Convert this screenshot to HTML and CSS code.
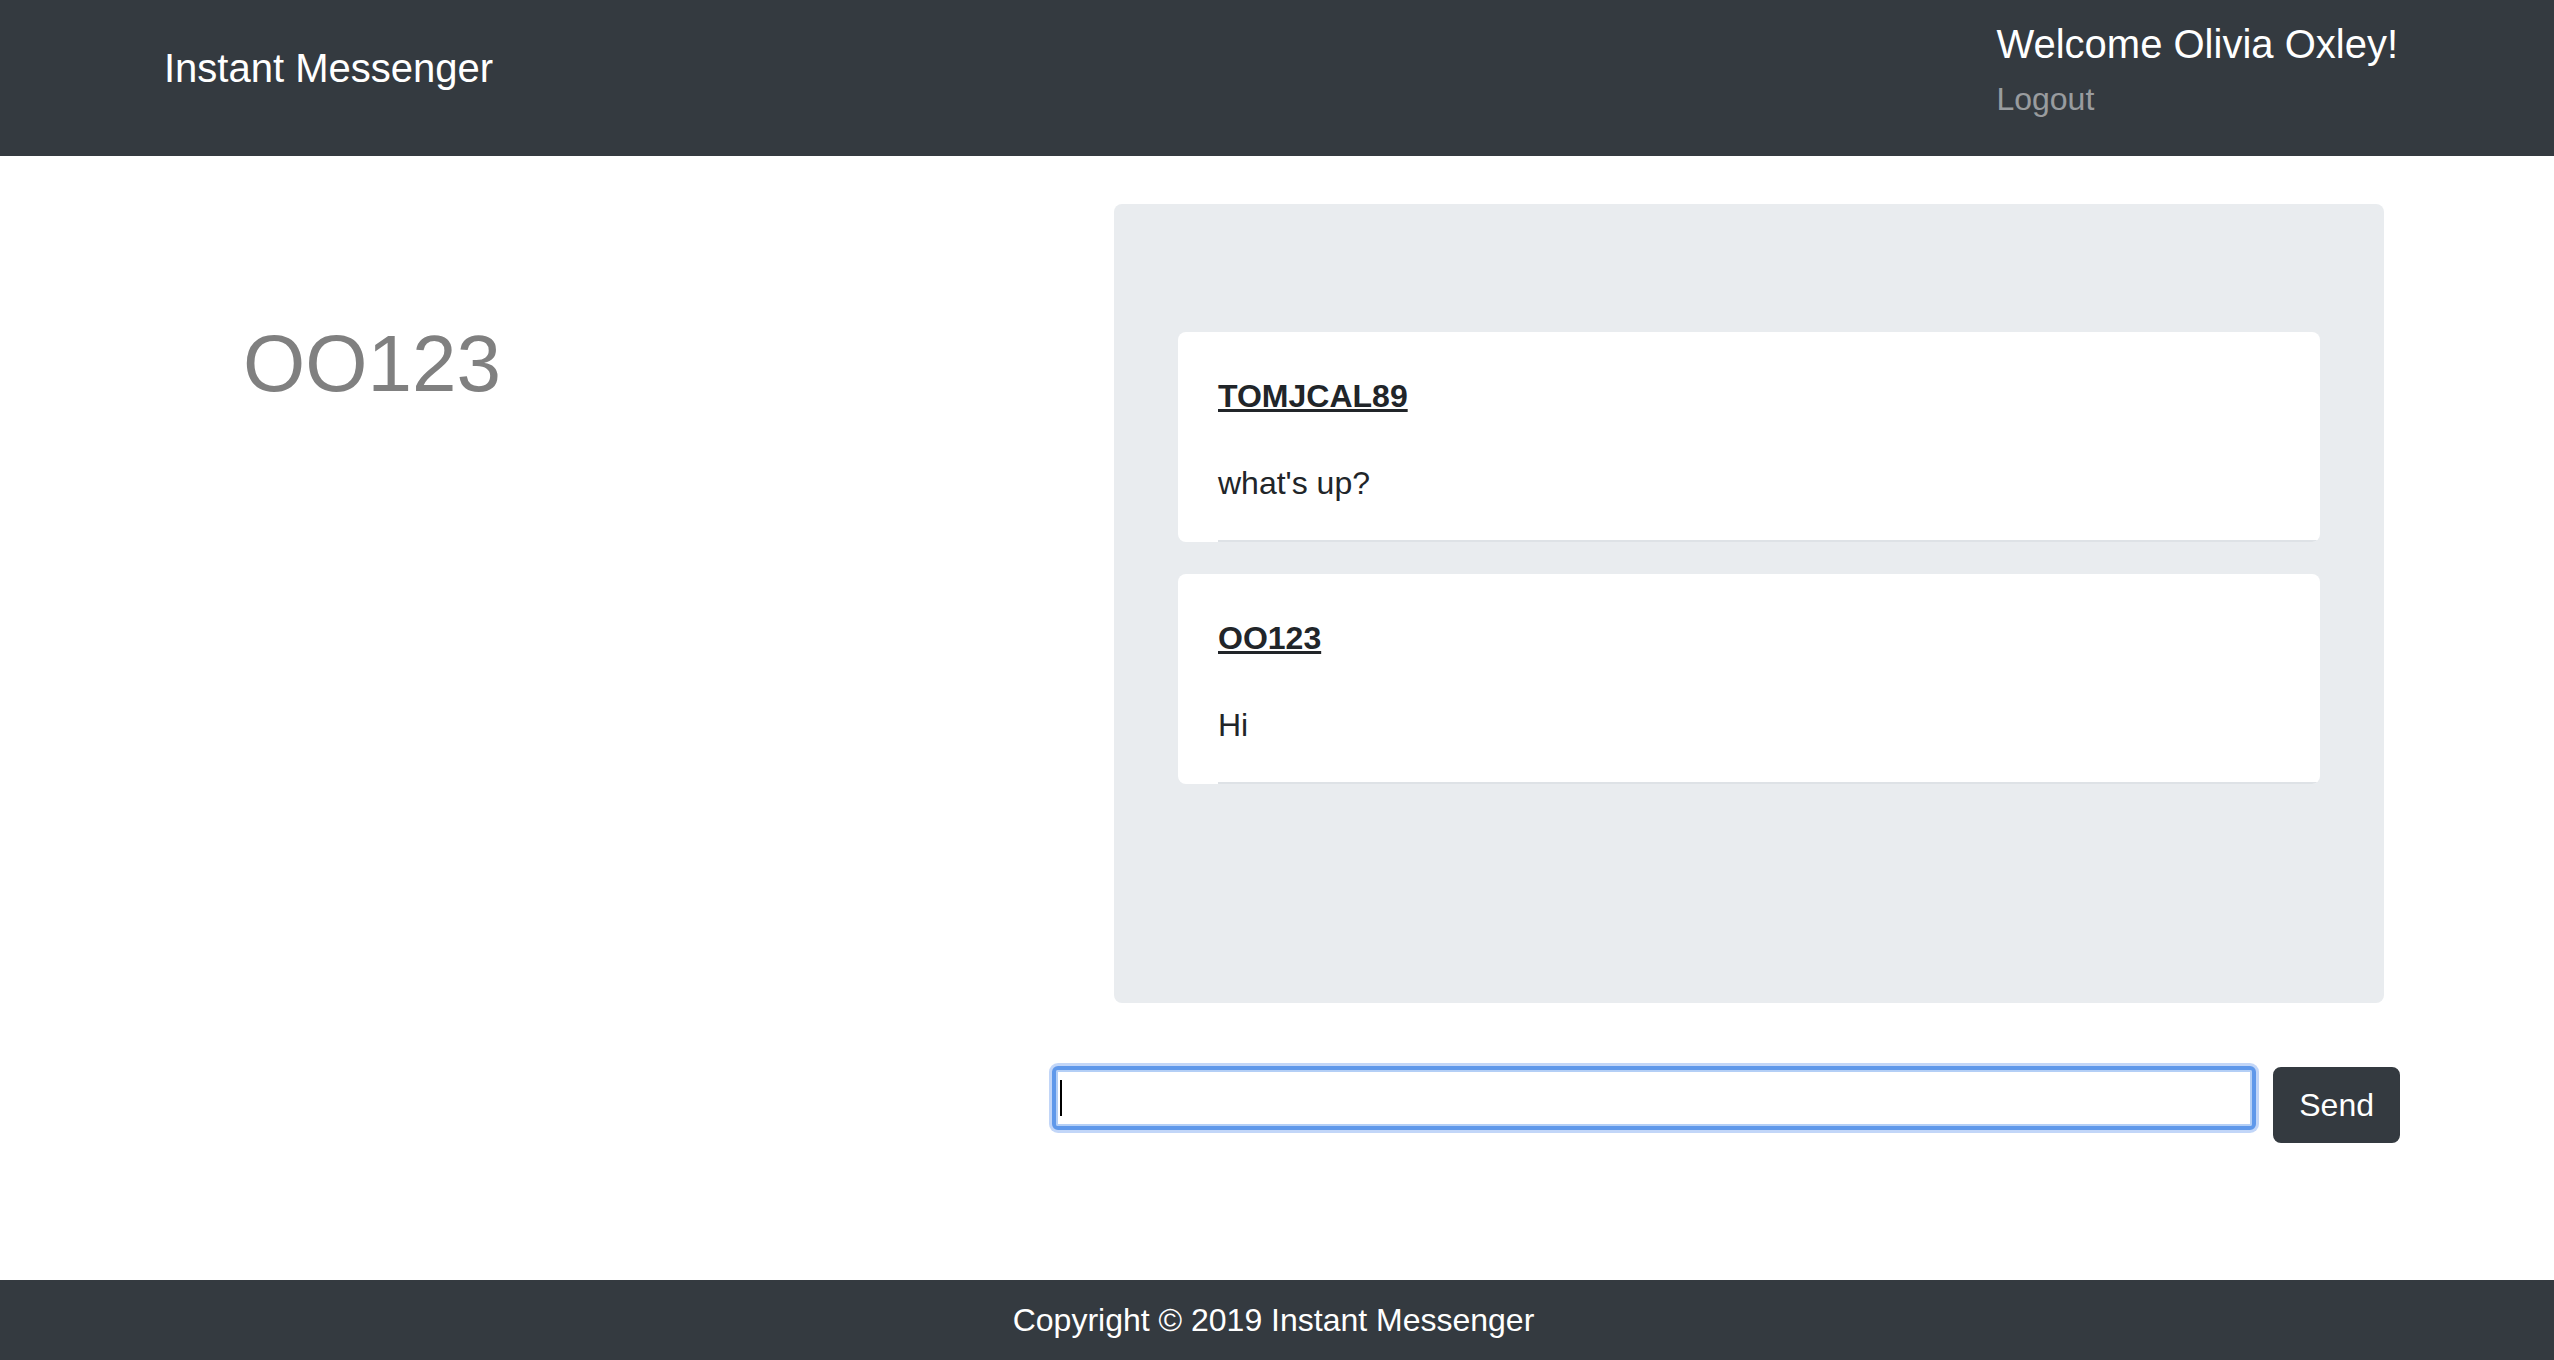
FILE: index.html
```html
<!DOCTYPE html>
<html lang="en">
<head>
<meta charset="utf-8">
<title>Instant Messenger</title>
<link rel="stylesheet" href="styles.css">
</head>
<body>
<header class="topbar">
  <a class="brand" href="#">Instant Messenger</a>
  <div class="user">
    <div class="welcome">Welcome Olivia Oxley!</div>
    <a class="logout" href="#">Logout</a>
  </div>
</header>
<main class="main">
  <section class="sidebar">
    <h1 class="me">OO123</h1>
  </section>
  <section class="chat">
    <div class="thread">
      <div class="msg">
        <div class="msg-body">
          <p class="author">TOMJCAL89</p>
          <p class="text">what's up?</p>
        </div>
      </div>
      <div class="msg">
        <div class="msg-body">
          <p class="author">OO123</p>
          <p class="text">Hi</p>
        </div>
      </div>
    </div>
    <form class="composer" onsubmit="return false;">
      <div class="field">
        <input class="input" type="text" aria-label="Message">
        <span class="caret"></span>
      </div>
      <button class="send" type="submit">Send</button>
    </form>
  </section>
</main>
<footer class="footer">Copyright © 2019 Instant Messenger</footer>
</body>
</html>
```

FILE: styles.css
```css
html, body {
  margin: 0;
  padding: 0;
}

body {
  font-family: "Liberation Sans", Arial, Helvetica, sans-serif;
  min-height: 100vh;
  display: flex;
  flex-direction: column;
  background: #fff;
  color: #212529;
}

.topbar {
  background: #343a40;
  height: 156px;
  box-sizing: border-box;
  display: flex;
  justify-content: space-between;
  align-items: flex-start;
  padding: 0 156px 0 164px;
}

.brand {
  color: #fff;
  font-size: 40px;
  line-height: 60px;
  margin-top: 38px;
  text-decoration: none;
}

.user {
  padding-top: 20px;
}

.welcome {
  color: #fff;
  font-size: 40px;
  line-height: 48px;
  margin-bottom: 7px;
}

.logout {
  display: block;
  color: rgba(255, 255, 255, 0.5);
  font-size: 32px;
  line-height: 48px;
  text-decoration: none;
}

.main {
  flex: 1;
  display: grid;
  grid-template-columns: 1052px 1fr;
  align-items: start;
}

.sidebar {
  padding: 160px 0 0 243px;
}

.me {
  margin: 0;
  font-size: 80px;
  line-height: 1.2;
  font-weight: normal;
  color: #808080;
}

.chat {
  padding-top: 48px;
}

.thread {
  margin-left: 62px;
  width: 1270px;
  box-sizing: border-box;
  background: #e9ecef;
  border-radius: 8px;
  padding: 128px 64px 219px;
}

.msg {
  background: #fff;
  border-radius: 8px;
  padding-left: 40px;
  overflow: hidden;
}

.msg + .msg {
  margin-top: 32px;
}

.msg-body {
  border-bottom: 2px solid #dee2e6;
  padding: 40px 0 33px;
}

.author {
  margin: 0 0 39px;
  font-size: 32px;
  line-height: 48px;
  font-weight: bold;
  text-decoration: underline;
  color: #212529;
}

.text {
  margin: 0;
  font-size: 32px;
  line-height: 48px;
  color: #212529;
}

.composer {
  margin: 63px 0 0;
  width: 1348px;
  display: flex;
  align-items: flex-start;
  gap: 17px;
}

.field {
  flex: 1;
  position: relative;
}

.input {
  display: block;
  width: 100%;
  height: 64px;
  box-sizing: border-box;
  border: 4px solid #5f98ea;
  border-radius: 6px;
  box-shadow: 0 0 0 3px rgba(120, 165, 240, 0.45), inset 0 0 0 2px #b4cff6;
  outline: none;
  background: #fff;
  font-family: inherit;
  font-size: 32px;
  padding: 0 8px;
}

.caret {
  position: absolute;
  left: 8px;
  top: 14px;
  width: 2px;
  height: 36px;
  background: #000;
}

.send {
  margin-top: 1px;
  background: #343a40;
  color: #fff;
  border: 2px solid #343a40;
  border-radius: 8px;
  font-family: inherit;
  font-size: 32px;
  line-height: 48px;
  padding: 12px 24px;
  cursor: pointer;
}

.footer {
  height: 80px;
  background: #343a40;
  color: #fff;
  font-size: 32px;
  line-height: 80px;
  text-align: center;
  padding-right: 7px;
}
```
